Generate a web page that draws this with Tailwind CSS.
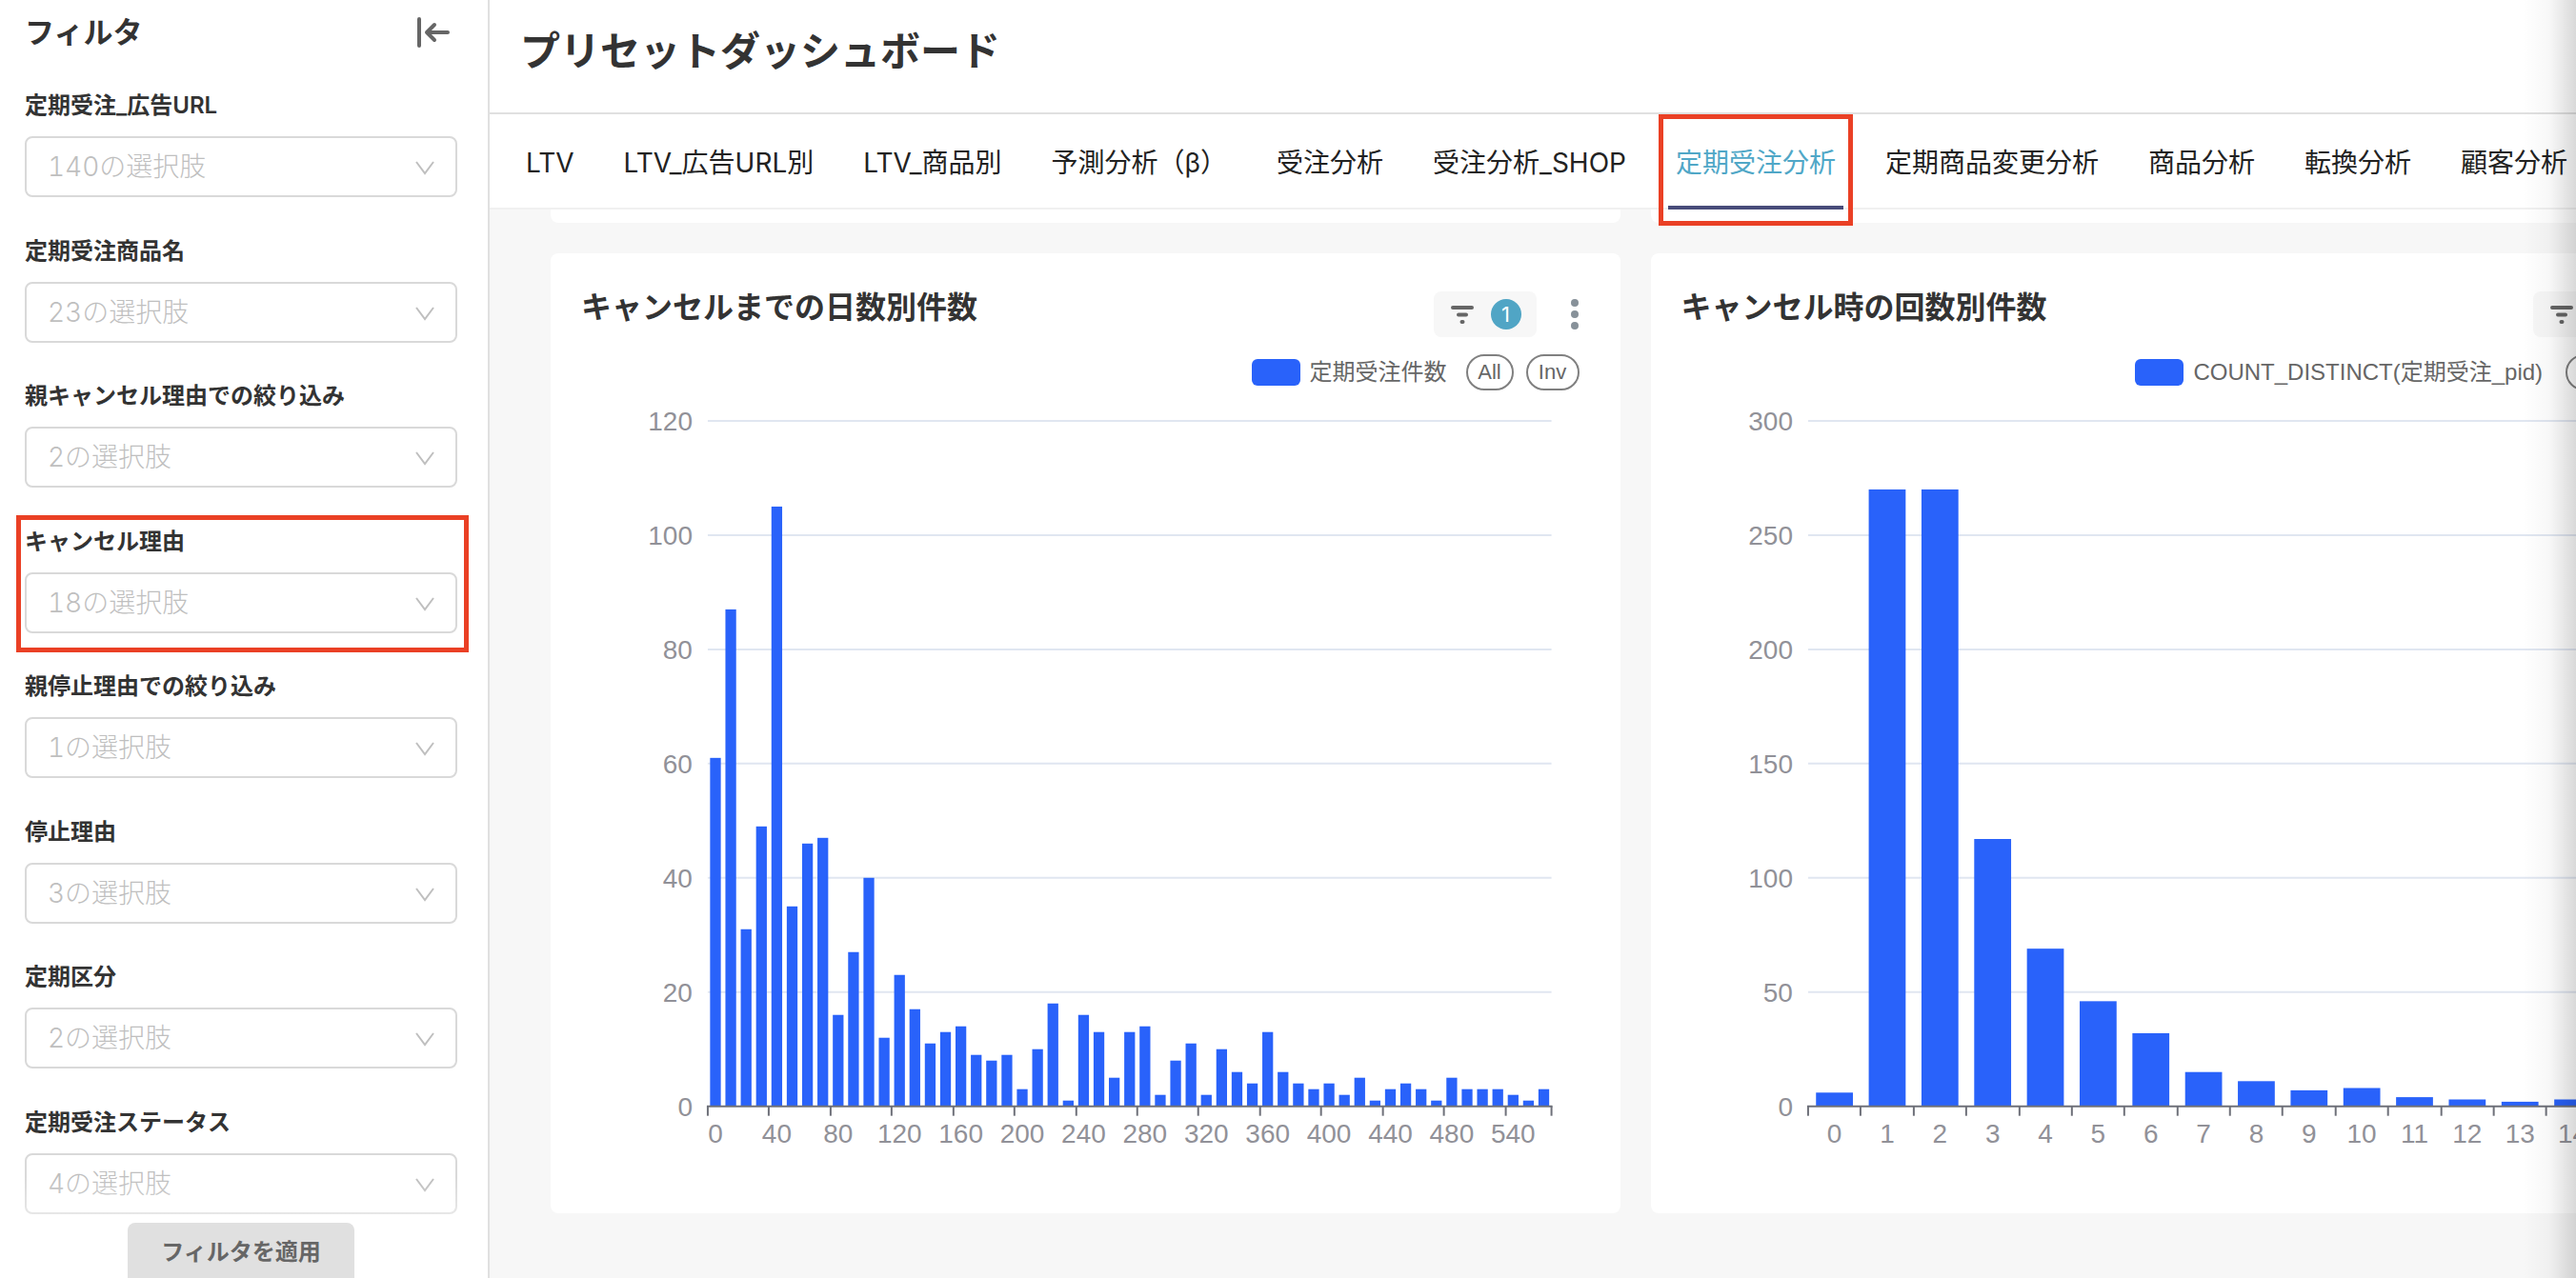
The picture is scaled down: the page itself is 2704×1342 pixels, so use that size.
<!DOCTYPE html>
<html lang="ja">
  <head>
    <meta charset="utf-8">
    <meta name="viewport" content="width=device-width, initial-scale=1">
    <title>プリセットダッシュボード</title>
    <script src="https://cdn.jsdelivr.net/npm/@tailwindcss/browser@4"></script>
  </head>
  <body class="font-['Inter','Noto_Sans_CJK_JP',sans-serif] text-[#333333] bg-white">
    <div class="relative flex h-screen overflow-hidden">

      <!-- filter sidebar -->
      <aside id="filters" class="relative flex flex-col w-[514px] shrink-0 border-r-2 border-[#e0e0e0] bg-white pl-[26px] pr-8">
        <div class="flex items-start justify-between h-[91px] pt-[14px]">
          <h2 class="text-[31px] leading-10 font-semibold">フィルタ</h2>
          <button type="button" aria-label="フィルタを閉じる" class="mr-1">
            <svg class="w-10 h-10" viewBox="0 0 40 40" fill="none" stroke="#666666" stroke-width="4" stroke-linecap="round" stroke-linejoin="round">
              <path d="M4 6v28M34 20H12M20 12l-8 8 8 8" />
            </svg>
          </button>
        </div>

        <form id="filter_list" class="flex flex-col flex-1 justify-between"></form>

        <div class="relative flex justify-center pt-[9px]">
          <div class="absolute inset-x-0 bottom-0 h-[106px] bg-linear-to-b from-white/0 to-white pointer-events-none"></div>
          <button type="submit" form="filter_list" class="relative w-[238px] h-[58px] pt-1 rounded-t-lg bg-[#e0e0e0] text-2xl font-semibold text-[#666666]">フィルタを適用</button>
        </div>
      </aside>

      <div class="flex flex-col flex-1 min-w-0">
        <header class="flex items-center h-[120px] shrink-0 pl-8 pb-3 border-b-2 border-[#e0e0e0]">
          <h1 class="text-[42px] font-semibold whitespace-nowrap">プリセットダッシュボード</h1>
        </header>

        <nav class="flex gap-9 h-[100px] shrink-0 pl-[30px] border-b-2 border-[#f0f0f0] text-[28px] text-[#222222] whitespace-nowrap">
          <a href="#" class="flex items-center px-2 pt-1">LTV</a>
          <a href="#" class="flex items-center px-2 pt-1">LTV_広告URL別</a>
          <a href="#" class="flex items-center px-2 pt-1">LTV_商品別</a>
          <a href="#" class="flex items-center px-2 pt-1">予測分析（β）</a>
          <a href="#" class="flex items-center px-2 pt-1">受注分析</a>
          <a href="#" class="flex items-center px-2 pt-1">受注分析_SHOP</a>
          <a href="#" aria-current="page" class="relative z-10 flex items-center px-2 pt-1 text-[#50a7c7]">
            定期受注分析
            <span class="absolute inset-x-0 -bottom-[2px] h-1 bg-[#484c7a]"></span>
            <span class="absolute -inset-x-[10px] top-0 h-[117px] border-5 border-[#ea4025]"></span>
          </a>
          <a href="#" class="flex items-center px-2 pt-1">定期商品変更分析</a>
          <a href="#" class="flex items-center px-2 pt-1">商品分析</a>
          <a href="#" class="flex items-center px-2 pt-1">転換分析</a>
          <a href="#" class="flex items-center px-2 pt-1">顧客分析</a>
        </nav>

        <main class="flex-1 min-h-0 overflow-hidden bg-[#f7f7f7]">
          <div class="grid grid-cols-2 gap-8 w-[106.9%] pl-16">
            <!-- end of the row above -->
            <div class="h-[14px] rounded-b-lg bg-white"></div>
            <div class="h-[14px] rounded-b-lg bg-white"></div>

            <section class="rounded-lg bg-white pt-10">
              <div class="flex items-start px-8">
                <h3 class="flex-1 text-[32px] leading-[34px] font-semibold">キャンセルまでの日数別件数</h3>
                <button type="button" aria-label="適用フィルタ 1" class="flex items-center gap-3 h-12 w-[108px] pl-3 rounded-lg bg-[#f7f7f7]">
                  <svg class="w-9 h-9" viewBox="0 0 36 36" fill="none" stroke="#666666" stroke-width="4" stroke-linecap="round">
                    <path d="M8 11h20M14 18.5h8M17.5 26h1" />
                  </svg>
                  <span class="flex items-center justify-center w-8 h-8 rounded-full bg-[#50a5c5] text-[22px] text-white">1</span>
                </button>
                <button type="button" aria-label="メニュー" class="ml-6">
                  <svg class="w-8 h-12" viewBox="0 0 32 48" fill="#879199"><circle cx="16" cy="12" r="4" /><circle cx="16" cy="24" r="4" /><circle cx="16" cy="36" r="4" /></svg>
                </button>
              </div>
              <div class="flex items-center justify-end mt-[18px] pr-[43px] font-['Liberation_Sans','Noto_Sans_CJK_JP',sans-serif] text-[#666666]">
                <span class="w-[51px] h-7 rounded-md bg-[#2962fa]"></span>
                <span class="ml-[10px] mr-5 text-2xl leading-8">定期受注件数</span>
                <button type="button" class="w-[50px] h-[38px] rounded-full border-2 border-[#808080] text-[22px] leading-8">All</button>
                <button type="button" class="w-14 h-[38px] ml-[13px] rounded-full border-2 border-[#808080] text-[22px] leading-8">Inv</button>
              </div>
              <svg id="chart_days" class="block w-full" viewBox="0 0 1123 864" role="img" aria-label="キャンセルまでの日数別件数"></svg>
            </section>

            <section class="rounded-lg bg-white pt-10">
              <div class="flex items-start px-8">
                <h3 class="flex-1 text-[32px] leading-[34px] font-semibold">キャンセル時の回数別件数</h3>
                <button type="button" aria-label="適用フィルタ 1" class="flex items-center gap-3 h-12 w-[108px] pl-3 rounded-lg bg-[#f7f7f7]">
                  <svg class="w-9 h-9" viewBox="0 0 36 36" fill="none" stroke="#666666" stroke-width="4" stroke-linecap="round">
                    <path d="M8 11h20M14 18.5h8M17.5 26h1" />
                  </svg>
                  <span class="flex items-center justify-center w-8 h-8 rounded-full bg-[#50a5c5] text-[22px] text-white">1</span>
                </button>
                <button type="button" aria-label="メニュー" class="ml-6">
                  <svg class="w-8 h-12" viewBox="0 0 32 48" fill="#879199"><circle cx="16" cy="12" r="4" /><circle cx="16" cy="24" r="4" /><circle cx="16" cy="36" r="4" /></svg>
                </button>
              </div>
              <div class="flex items-center justify-end mt-[18px] pr-[43px] font-['Liberation_Sans','Noto_Sans_CJK_JP',sans-serif] text-[#666666]">
                <span class="w-[51px] h-7 rounded-md bg-[#2962fa]"></span>
                <span class="ml-[10px] mr-6 text-2xl leading-8">COUNT_DISTINCT(定期受注_pid)</span>
                <button type="button" class="w-[50px] h-[38px] rounded-full border-2 border-[#808080] text-[22px] leading-8">All</button>
                <button type="button" class="w-14 h-[38px] ml-[13px] rounded-full border-2 border-[#808080] text-[22px] leading-8">Inv</button>
              </div>
              <svg id="chart_count" class="block w-full" viewBox="0 0 1123 864" role="img" aria-label="キャンセル時の回数別件数"></svg>
            </section>
          </div>
        </main>
      </div>

      <!-- shade along the right edge -->
      <div class="absolute z-20 inset-y-0 right-0 w-14 bg-linear-to-l from-black/15 via-black/3 via-50% to-black/0 pointer-events-none"></div>
    </div>

    <script>
      const filters = [
        ["定期受注_広告URL", 140],
        ["定期受注商品名", 23],
        ["親キャンセル理由での絞り込み", 2],
        ["キャンセル理由", 18, true],
        ["親停止理由での絞り込み", 1],
        ["停止理由", 3],
        ["定期区分", 2],
        ["定期受注ステータス", 4]
      ];

      document.getElementById("filter_list").innerHTML = filters.map(([name, count, marked], i) => `
        <div class="relative">
          <label for="filter_${i}" class="block mb-3 text-2xl leading-10 font-semibold">${name}</label>
          <div class="relative">
            <select id="filter_${i}" class="block w-full h-16 pl-[22px] appearance-none rounded-lg border-2 border-[#d9d9d9] bg-white text-[28px] font-light tabular-nums text-[#bfbfbf]">
              <option>${count}の選択肢</option>
            </select>
            <svg class="absolute right-6 top-[26px] w-5 h-4 pointer-events-none" viewBox="0 0 20 16" fill="none" stroke="#bfbfbf" stroke-width="2"><path d="M1 1l9 12 9-12" /></svg>
          </div>
          ${marked ? '<div class="absolute -left-[9px] -right-3 -top-2 -bottom-5 border-5 border-[#ea4025] pointer-events-none"></div>' : ""}
        </div>`).join("");

      // plot area inside the 1123 x 864 viewBox
      const left = 165, right = 1051, top0 = 32, base = 752;

      function drawChart(id, values, max, step, every, labelOf) {
        const band = (right - left) / values.length;
        const y = (v) => base - (v / max) * (base - top0);
        let out = "";
        for (let v = 0; v <= max; v += step) {
          if (v > 0) out += `<path d="M${left} ${y(v)}H${right}" stroke="#e0e6f1" stroke-width="2" />`;
          out += `<text x="149" y="${y(v) + 10}" text-anchor="end">${v}</text>`;
        }
        values.forEach((v, i) => {
          out += `<rect x="${left + band * (i + 0.15)}" y="${y(v)}" width="${band * 0.7}" height="${base - y(v)}" fill="#2962fa" />`;
        });
        out += `<path d="M${left - 1} ${base}H${right + 1}" stroke="#6e7079" stroke-width="2" />`;
        for (let i = 0; i <= values.length; i++) {
          if (i % every && i !== values.length) continue;
          const x = Math.round(left + band * i);
          out += `<path d="M${x} ${base}v10" stroke="#6e7079" stroke-width="2" />`;
          if (i < values.length) out += `<text x="${left + band * (i + 0.5)}" y="790" text-anchor="middle">${labelOf(i)}</text>`;
        }
        document.getElementById(id).innerHTML =
          `<g class="font-['Liberation_Sans',sans-serif] text-[28px]" fill="#919198">${out}</g>`;
      }

      drawChart("chart_days", [
        61, 87, 31, 49, 105, 35, 46, 47, 16, 27, 40, 12, 23, 17, 11, 13, 14, 9, 8, 9,
        3, 10, 18, 1, 16, 13, 5, 13, 14, 2, 8, 11, 2, 10, 6, 4, 13, 6, 4, 3,
        4, 2, 5, 1, 3, 4, 3, 1, 5, 3, 3, 3, 2, 1, 3
      ], 120, 20, 4, (i) => (i === 52 ? 540 : i * 10));

      drawChart("chart_count", [6, 270, 270, 117, 69, 46, 32, 15, 11, 7, 8, 4, 3, 2, 3, 2], 300, 50, 1, (i) => i);
    </script>
  </body>
</html>
